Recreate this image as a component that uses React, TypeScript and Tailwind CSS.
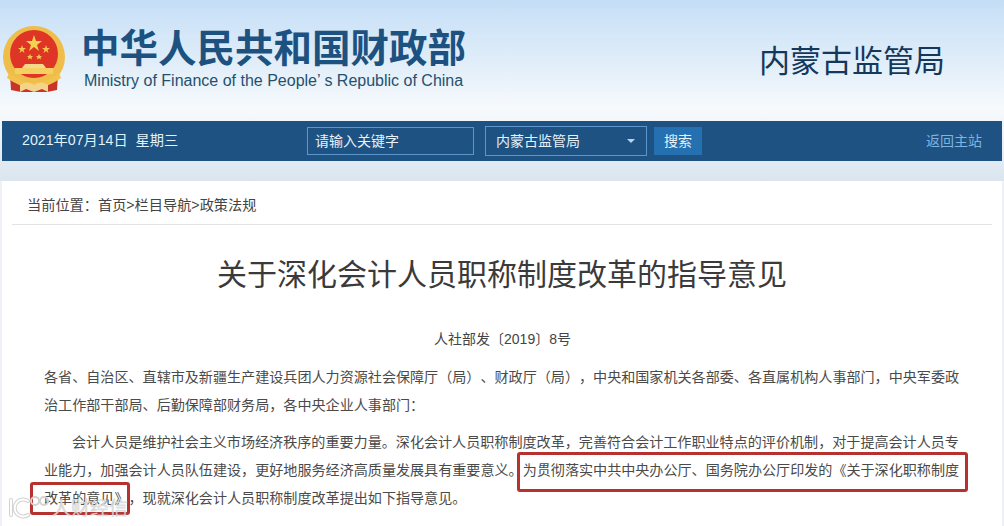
import React from "react";

const cjk = "font-['Liberation_Sans','Noto_Sans_CJK_SC',sans-serif]";

function Emblem() {
  return (
    <svg width="66" height="70" viewBox="0 0 66 70" className="shrink-0">
      <path d="M9 50 L10 66 L20 68 L46 68 L56 66 L57 50 Z" fill="#c8332a" />
      <circle cx="33" cy="33" r="31" fill="#eebd4a" />
      <circle cx="33" cy="30" r="24" fill="#df3526" />
      <path d="M33 11 l2 6 h6 l-5 4 2 6 -5 -4 -5 4 2 -6 -5 -4 h6 z" fill="#f5d24e" />
      <path d="M21 21 l1 3 h3 l-2.500 2 1 3 -2.500 -2 -2.500 2 1 -3 -2.500 -2 h3 z" fill="#f2c94c" />
      <path d="M45 21 l1 3 h3 l-2.500 2 1 3 -2.500 -2 -2.500 2 1 -3 -2.500 -2 h3 z" fill="#f2c94c" />
      <path d="M29 30 l1 2 h2 l-1.500 1.500 .5 2 -2 -1.200 -2 1.200 .5 -2 -1.500 -1.500 h2 z" fill="#f2c94c" />
      <path d="M38 30 l1 2 h2 l-1.500 1.500 .5 2 -2 -1.200 -2 1.200 .5 -2 -1.500 -1.500 h2 z" fill="#f2c94c" />
      <path d="M24 40 h18 l3 4 h-24 z" fill="#f5d98a" />
      <rect x="14" y="44" width="38" height="6" fill="#f6cf63" />
      <path d="M8 49 Q33 68 58 49 L60 54 Q33 74 6 54 Z" fill="#f2c14e" />
      <path d="M19 61 Q26 56 33 61 Q40 56 47 61 L47 68 L41 65 L33 68 L25 65 L19 68 Z" fill="#f3d48a" />
    </svg>
  );
}

function WatermarkLogo() {
  return (
    <svg width="42" height="26" viewBox="0 0 42 26" fill="none" className="shrink-0">
      <g stroke="#d2d2d2" strokeWidth="4" strokeLinecap="round">
        <path d="M3 6 L3 21" />
        <path d="M20 7 A8.500 8.500 0 1 0 20 21" />
        <circle cx="27" cy="7" r="4" strokeWidth="2" />
        <circle cx="36" cy="7" r="4" strokeWidth="2" />
      </g>
      <g stroke="#ffffff" strokeWidth="2" strokeLinecap="round">
        <path d="M3 6 L3 21" />
        <path d="M20 7 A8.500 8.500 0 1 0 20 21" />
      </g>
    </svg>
  );
}

export default function App() {
  return (
    <div className={`relative flex h-[526px] w-[1004px] flex-col overflow-hidden bg-white [text-spacing-trim:space-all] ${cjk}`}>
      {/* 顶部蓝天背景 */}
      <div className="flex h-[181px] shrink-0 flex-col bg-[linear-gradient(180deg,#c4ddf5_0%,#cfe4f8_12%,#e3eff9_38%,#f7fafd_60%,#e8f0f7_80%,#dbe5ee_100%)]">
        <div className="flex h-[121px] items-start">
          <div className="ml-[1px] mt-[24px]">
            <Emblem />
          </div>
          <div className="ml-[14px] mt-[26px]">
            <div className="text-[38.5px] font-bold leading-[46px] whitespace-nowrap text-[#1c5180]">中华人民共和国财政部</div>
            <div className="ml-[3px] text-[16px] leading-[18px] whitespace-nowrap text-[#24506f]">
              Ministry of Finance of the People’ s Republic of China
            </div>
          </div>
          <div className="ml-auto mr-[59px] mt-[42px] text-[31px] leading-[40px] text-[#14385c]">内蒙古监管局</div>
        </div>

        {/* 导航条 */}
        <div className="mx-[2px] flex h-[40px] items-center bg-[#1d5282] text-[14px]">
          <div className="ml-[20px] w-[285px] text-[14.2px] whitespace-nowrap text-[#e3f1fb]">2021年07月14日&nbsp;&nbsp;星期三</div>
          <div className="flex h-[28px] w-[167px] items-center border border-[#5b97cc] pl-[7px] text-[#e6f1fa]">请输入关键字</div>
          <div className="ml-[11px] flex h-[30px] w-[162px] items-center justify-between border border-[#5b97cc] pl-[10px] pr-[11px] text-[#e6f1fa]">
            <span>内蒙古监管局</span>
            <span className="h-0 w-0 border-x-[4px] border-t-[4px] border-x-transparent border-t-[#b9d4ea]" />
          </div>
          <div className="ml-[7px] flex h-[28px] w-[48px] items-center justify-center bg-[#2470b0] text-[#e6f1fa]">搜索</div>
          <div className="ml-auto mr-[20px] text-[#7fb4e0]">返回主站</div>
        </div>
        <div className="flex-1" />
      </div>

      {/* 正文 */}
      <div className="flex-1 border-x-2 border-[#eef2f6]">
        <div className="mx-[10px] flex h-[44px] items-end border-b border-[#e3e3e3] pb-[10px] pl-[15px] text-[14.2px] leading-[18px] text-[#444]">
          当前位置：首页&gt;栏目导航&gt;政策法规
        </div>
        <h1 className="mt-[30px] text-center text-[30px] leading-[40px] text-[#3a3a3a]">关于深化会计人员职称制度改革的指导意见</h1>
        <div className="mt-[34px] pl-[1px] text-center text-[14px] leading-[20px] text-[#444]">人社部发〔2019〕8号</div>
        <div className="mt-[14px] px-[42px] text-[14.09px] leading-[28px] whitespace-nowrap text-[#4a4a4a]">
          <p>
            各省、自治区、直辖市及新疆生产建设兵团人力资源社会保障厅（局）、财政厅（局），中央和国家机关各部委、各直属机构人事部门，中央军委政
            <br />
            治工作部干部局、后勤保障部财务局，各中央企业人事部门：
          </p>
          <p className="mt-[9px] indent-[28px]">
            会计人员是维护社会主义市场经济秩序的重要力量。深化会计人员职称制度改革，完善符合会计工作职业特点的评价机制，对于提高会计人员专
            <br />
            业能力，加强会计人员队伍建设，更好地服务经济高质量发展具有重要意义。为贯彻落实中共中央办公厅、国务院办公厅印发的《关于深化职称制度
            <br />
            改革的意见》，现就深化会计人员职称制度改革提出如下指导意见。
          </p>
        </div>
      </div>

      {/* 红框标注 */}
      <div className="absolute left-[517px] top-[452px] h-[40px] w-[451px] rounded-[3px] border-[3px] border-[#b5322f]" />
      <div className="absolute left-[30px] top-[482px] h-[33px] w-[100px] rounded-[3px] border-[3px] border-[#b5322f]" />

      {/* 水印 */}
      <div className="absolute left-[8px] top-[494px] flex items-end">
        <WatermarkLogo />
        <span className="ml-[2px] translate-y-[1px] text-[19px] leading-[24px] whitespace-nowrap text-white/50 [text-shadow:0_0_1px_#b0b0b0]">人财经信</span>
      </div>
    </div>
  );
}
